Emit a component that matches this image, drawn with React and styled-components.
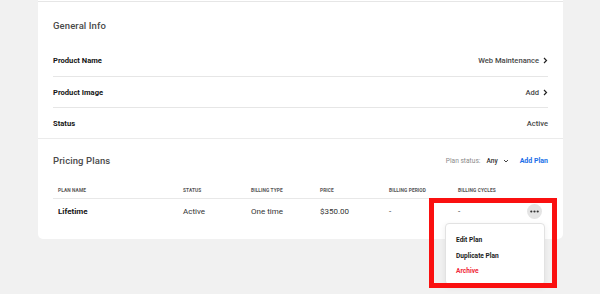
import React from "react";
import styled, { createGlobalStyle } from "styled-components";

const Global = createGlobalStyle`
  html, body { margin: 0; padding: 0; background: #f1f1f1; }
  body { font-family: Roboto, "Liberation Sans", Arial, sans-serif; overflow: hidden; }
  * { box-sizing: border-box; }
`;

const Page = styled.div`
  width: 600px;
  height: 294px;
  padding: 0 37px 0 38px;
`;

const Card = styled.div`
  background: #fff;
  border-radius: 0 0 5px 5px;
  padding-top: 1px;
`;

const TopRule = styled.div`
  height: 1px;
  background: #e6e6e6;
`;

const Section = styled.section`
  padding: 0 15px;
  border-bottom: ${(p) => (p.$ruled ? "1px solid #ebebeb" : "none")};
`;

const SectionHead = styled.div`
  display: flex;
  align-items: center;
  justify-content: space-between;
  height: ${(p) => p.$h}px;
  padding-top: ${(p) => p.$pt || 0}px;
`;

const Title = styled.h2`
  margin: 0;
  font-size: 9.5px;
  font-weight: 500;
  color: #4a4a4a;
  letter-spacing: 0.1px;
`;

const InfoRow = styled.div`
  display: flex;
  align-items: center;
  justify-content: space-between;
  height: 31px;
  border-top: ${(p) => (p.$first ? "none" : "1px solid #e6e6e6")};
`;

const Label = styled.span`
  font-size: 7.6px;
  font-weight: 700;
  color: #151515;
`;

const Value = styled.span`
  display: flex;
  align-items: center;
  gap: 4px;
  font-size: 7.6px;
  font-weight: 500;
  color: #474747;
`;

const Chevron = () => (
  <svg width="5" height="7" viewBox="0 0 5 7">
    <path d="M1 1l2.5 2.5L1 6" fill="none" stroke="#222" strokeWidth="1.2" />
  </svg>
);

const Tools = styled.div`
  display: flex;
  align-items: center;
  font-size: 6.6px;
`;

const Muted = styled.span`
  color: #8a8a8a;
`;

const Select = styled.span`
  display: flex;
  align-items: center;
  gap: 5px;
  margin-left: 6px;
  color: #333;
  font-weight: 500;
`;

const AddLink = styled.a`
  margin-left: 11px;
  color: #1a6fe8;
  font-weight: 700;
  font-size: 7px;
`;

const Grid = styled.div`
  display: grid;
  grid-template-columns: 125px 68px 69px 69px 69px 95px;
  align-items: center;
  height: ${(p) => p.$h}px;
  border-bottom: ${(p) => (p.$ruled ? "1px solid #e8e8e8" : "none")};
`;

const Th = styled.div`
  padding-left: 5px;
  font-size: 4.8px;
  font-weight: 700;
  color: #555;
  text-transform: uppercase;
  letter-spacing: 0.1px;
`;

const Td = styled.div`
  padding-left: 5px;
  font-size: 8px;
  font-weight: ${(p) => (p.$bold ? 700 : 400)};
  color: ${(p) => (p.$bold ? "#151515" : "#333")};
`;

const ActionCell = styled.div`
  position: relative;
  display: flex;
  align-items: center;
  justify-content: space-between;
  height: 24px;
  padding: 0 6px 0 5px;
  font-size: 8px;
  color: #333;
`;

const MoreBtn = styled.button`
  width: 15px;
  height: 15px;
  border-radius: 50%;
  border: none;
  background: #e4e4e4;
  padding: 0;
  display: flex;
  align-items: center;
  justify-content: center;
`;

const Menu = styled.div`
  position: absolute;
  top: 24px;
  right: 3px;
  width: 100px;
  height: 62px;
  background: #fff;
  border: 1px solid #e2e2e2;
  border-radius: 4px;
  box-shadow: 0 2px 6px rgba(0, 0, 0, 0.08);
  padding: 12px 0 0 10px;
  display: flex;
  flex-direction: column;
  gap: 6px;
  z-index: 2;
`;

const MenuItem = styled.div`
  font-size: 6.6px;
  font-weight: 700;
  line-height: 9.5px;
  color: ${(p) => (p.$danger ? "#f0283a" : "#1a1a1a")};
`;

const Highlight = styled.div`
  position: absolute;
  left: -24px;
  top: -1px;
  width: 128px;
  height: 90px;
  border: 5px solid #fa1010;
  z-index: 3;
  pointer-events: none;
`;

const Spacer = styled.div`
  height: ${(p) => p.$h}px;
`;

export default function App() {
  return (
    <>
      <Global />
      <Page>
        <Card>
          <TopRule />
          <Section $ruled>
            <SectionHead $h={43} $pt={3}>
              <Title>General Info</Title>
            </SectionHead>
            <InfoRow $first>
              <Label>Product Name</Label>
              <Value>
                Web Maintenance <Chevron />
              </Value>
            </InfoRow>
            <InfoRow>
              <Label>Product Image</Label>
              <Value>
                Add <Chevron />
              </Value>
            </InfoRow>
            <InfoRow>
              <Label>Status</Label>
              <Value>Active</Value>
            </InfoRow>
          </Section>
          <Section>
            <SectionHead $h={43}>
              <Title>Pricing Plans</Title>
              <Tools>
                <Muted>Plan status:</Muted>
                <Select>
                  Any
                  <svg width="6" height="4" viewBox="0 0 6 4">
                    <path d="M1 1l2 2 2-2" fill="none" stroke="#444" strokeWidth="1" />
                  </svg>
                </Select>
                <AddLink>Add Plan</AddLink>
              </Tools>
            </SectionHead>
            <Grid $h={17} $ruled>
              <Th>Plan name</Th>
              <Th>Status</Th>
              <Th>Billing type</Th>
              <Th>Price</Th>
              <Th>Billing period</Th>
              <Th>Billing cycles</Th>
            </Grid>
            <Grid $h={24}>
              <Td $bold>Lifetime</Td>
              <Td>Active</Td>
              <Td>One time</Td>
              <Td>$350.00</Td>
              <Td>-</Td>
              <ActionCell>
                <span>-</span>
                <MoreBtn aria-label="More">
                  <svg width="9" height="3" viewBox="0 0 9 3">
                    <circle cx="1.3" cy="1.5" r="1.1" fill="#333" />
                    <circle cx="4.5" cy="1.5" r="1.1" fill="#333" />
                    <circle cx="7.7" cy="1.5" r="1.1" fill="#333" />
                  </svg>
                </MoreBtn>
                <Menu>
                  <MenuItem>Edit Plan</MenuItem>
                  <MenuItem>Duplicate Plan</MenuItem>
                  <MenuItem $danger>Archive</MenuItem>
                </Menu>
                <Highlight />
              </ActionCell>
            </Grid>
            <Spacer $h={16} />
          </Section>
        </Card>
      </Page>
    </>
  );
}
